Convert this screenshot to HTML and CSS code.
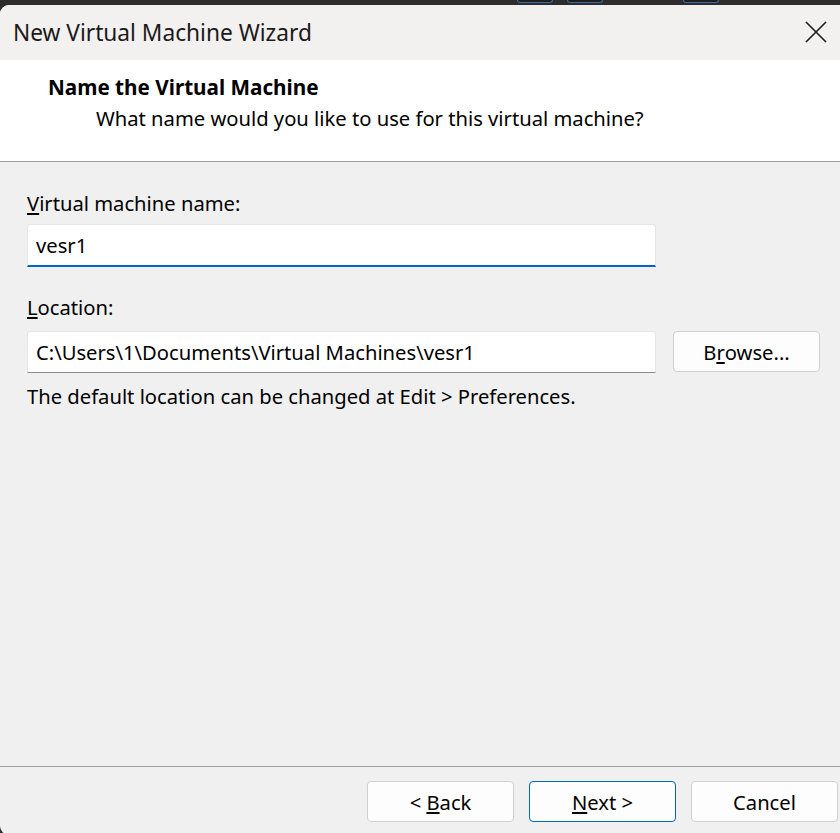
FILE: index.html
```html
<!DOCTYPE html>
<html lang="en">
<head>
<meta charset="utf-8">
<title>New Virtual Machine Wizard</title>
<link rel="stylesheet" href="styles.css">
</head>
<body>
<div class="desk">
  <span class="desk-tab t1"></span>
  <span class="desk-tab t2"></span>
  <span class="desk-tab t3"></span>
</div>
<div class="window">
  <div class="titlebar">
    <span class="title">New Virtual Machine Wizard</span>
    <button class="close" aria-label="Close">
      <svg width="22" height="22" viewBox="0 0 22 22"><path d="M1 1 L21 21 M21 1 L1 21" stroke="#1a1a1a" stroke-width="1.6" fill="none"/></svg>
    </button>
  </div>
  <div class="header">
    <div class="heading">Name the Virtual Machine</div>
    <div class="subheading">What name would you like to use for this virtual machine?</div>
  </div>
  <div class="content">
    <div class="label"><u>V</u>irtual machine name:</div>
    <div class="row">
      <div class="field focused">vesr1</div>
    </div>
    <div class="label label2"><u>L</u>ocation:</div>
    <div class="row row2">
      <div class="field">C:\Users\1\Documents\Virtual Machines\vesr1</div>
      <button class="btn browse">B<u>r</u>owse...</button>
    </div>
    <div class="note">The default location can be changed at Edit &gt; Preferences.</div>
  </div>
  <div class="footer">
    <button class="btn"><span>&lt; <u>B</u>ack</span></button>
    <button class="btn primary"><span><u>N</u>ext &gt;</span></button>
    <button class="btn">Cancel</button>
  </div>
</div>
</body>
</html>
```

FILE: styles.css
```css
html, body {
  margin: 0;
  padding: 0;
}
body {
  background: #2d2d2d;
  width: 840px;
  height: 833px;
  overflow: hidden;
  font-family: "Noto Sans", "Open Sans", sans-serif;
  color: #000;
}
.desk {
  height: 5px;
  display: flex;
  align-items: flex-start;
  padding-left: 517px;
  box-sizing: border-box;
}
.desk-tab {
  display: block;
  width: 36px;
  height: 3px;
  background: #1e1e1e;
  border: 1px solid #3a6ea5;
  border-top: none;
  border-radius: 0 0 4px 4px;
  box-sizing: border-box;
}
.t2 { margin-left: 14px; }
.t3 { margin-left: 80px; }
.window {
  height: 830px;
  background: #f0f0f0;
  border-radius: 9px 0 0 9px;
  overflow: hidden;
  display: flex;
  flex-direction: column;
}
.titlebar {
  height: 55px;
  flex: none;
  background: #f3f0f0;
  display: flex;
  align-items: center;
  justify-content: space-between;
  padding-left: 13px;
  box-sizing: border-box;
}
.title {
  font-size: 22.7px;
  color: #1a1a1a;
  margin-top: -1px;
}
.close {
  border: none;
  background: transparent;
  width: 46px;
  height: 40px;
  padding: 0;
  margin-right: 1px;
  display: flex;
  align-items: center;
  justify-content: center;
  margin-top: -2px;
}
.header {
  height: 102px;
  flex: none;
  background: #fff;
  border-bottom: 1px solid #a0a0a0;
  box-sizing: border-box;
  padding-top: 14px;
}
.heading {
  font-size: 20.7px;
  font-weight: 700;
  line-height: 26px;
  padding-left: 48px;
}
.subheading {
  font-size: 20.2px;
  line-height: 26px;
  padding-left: 96px;
  margin-top: 5px;
}
.content {
  flex: 1;
  padding: 28px 0 0 27px;
}
.label {
  font-size: 20.2px;
  line-height: 26px;
  color: #000;
}
.label2 { margin-top: 27px; }
.row {
  display: flex;
  align-items: flex-start;
  margin-top: 8px;
}
.row2 { margin-top: 11px; }
.field {
  width: 629px;
  height: 42px;
  box-sizing: border-box;
  background: #fff;
  border: 1px solid #e6e6e6;
  border-bottom: 1px solid #8a8a8a;
  border-radius: 3px 3px 0 0;
  padding-left: 8px;
  font-size: 20.2px;
  line-height: 40px;
  color: #000;
}
.field.focused {
  height: 43px;
  border-bottom: 2px solid #0067c0;
}
.btn {
  width: 147px;
  height: 41px;
  box-sizing: border-box;
  background: #fdfdfd;
  border: 1px solid #d0d0d0;
  border-radius: 4px;
  font-family: inherit;
  font-size: 20.2px;
  color: #000;
  padding: 0;
  display: flex;
  align-items: center;
  justify-content: center;
}
.browse { margin-left: 17px; }
.note {
  font-size: 20.2px;
  line-height: 26px;
  margin-top: 10px;
}
.footer {
  flex: none;
  height: 68px;
  box-sizing: border-box;
  border-top: 1px solid #a0a0a0;
  display: flex;
  justify-content: flex-end;
  align-items: flex-start;
  gap: 15px;
  padding-top: 14px;
  padding-right: 2px;
  margin-bottom: 1px;
}
.btn.primary {
  border-color: #0067c0;
}
```
